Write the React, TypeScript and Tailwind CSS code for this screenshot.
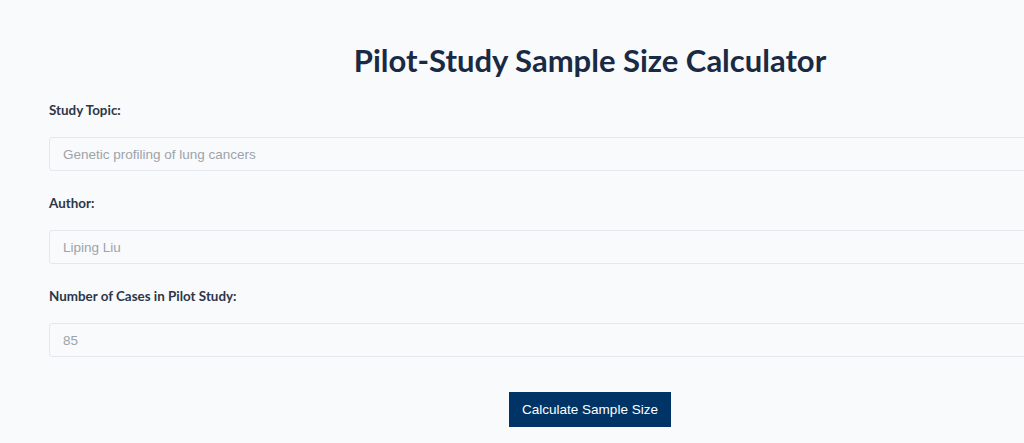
import React from 'react';

const labelCls = 'block text-[13.4px] font-bold text-[#2d3748] mb-[17px]';
const inputCls =
  'block w-full h-[34px] rounded-[3px] border border-[#e3e8ef] bg-[#f8fafc] px-[13px] text-[13.5px] text-[#6b7280] placeholder-[#9ea3aa] outline-none';

export default function App() {
  return (
    <div
      className="min-h-[443px] w-full overflow-hidden bg-[#f8fafc]"
      style={{ fontFamily: 'Lato, "Open Sans", sans-serif' }}
    >
      <div className="w-[1180px] px-[49px] pt-[40px]">
        <h1 className="text-center text-[31px] font-bold leading-[40px] text-[#1a2a44]">
          Pilot-Study Sample Size Calculator
        </h1>

        <div className="mt-[20px]">
          <label className={labelCls}>Study Topic:</label>
          <input
            type="text"
            placeholder="Genetic profiling of lung cancers"
            className={inputCls}
            style={{ fontFamily: '"Liberation Sans", Arial, sans-serif' }}
          />
        </div>

        <div className="mt-[22px]">
          <label className={labelCls}>Author:</label>
          <input
            type="text"
            placeholder="Liping Liu"
            className={inputCls}
            style={{ fontFamily: '"Liberation Sans", Arial, sans-serif' }}
          />
        </div>

        <div className="mt-[22px]">
          <label className={labelCls}>Number of Cases in Pilot Study:</label>
          <input
            type="text"
            placeholder="85"
            className={inputCls}
            style={{ fontFamily: '"Liberation Sans", Arial, sans-serif' }}
          />
        </div>

        <div className="mt-[35px] flex justify-center">
          <button
            className="h-[35px] w-[162px] bg-[#003366] text-[13.5px] text-white"
            style={{ fontFamily: '"Liberation Sans", Arial, sans-serif' }}
          >
            Calculate Sample Size
          </button>
        </div>
      </div>
    </div>
  );
}
